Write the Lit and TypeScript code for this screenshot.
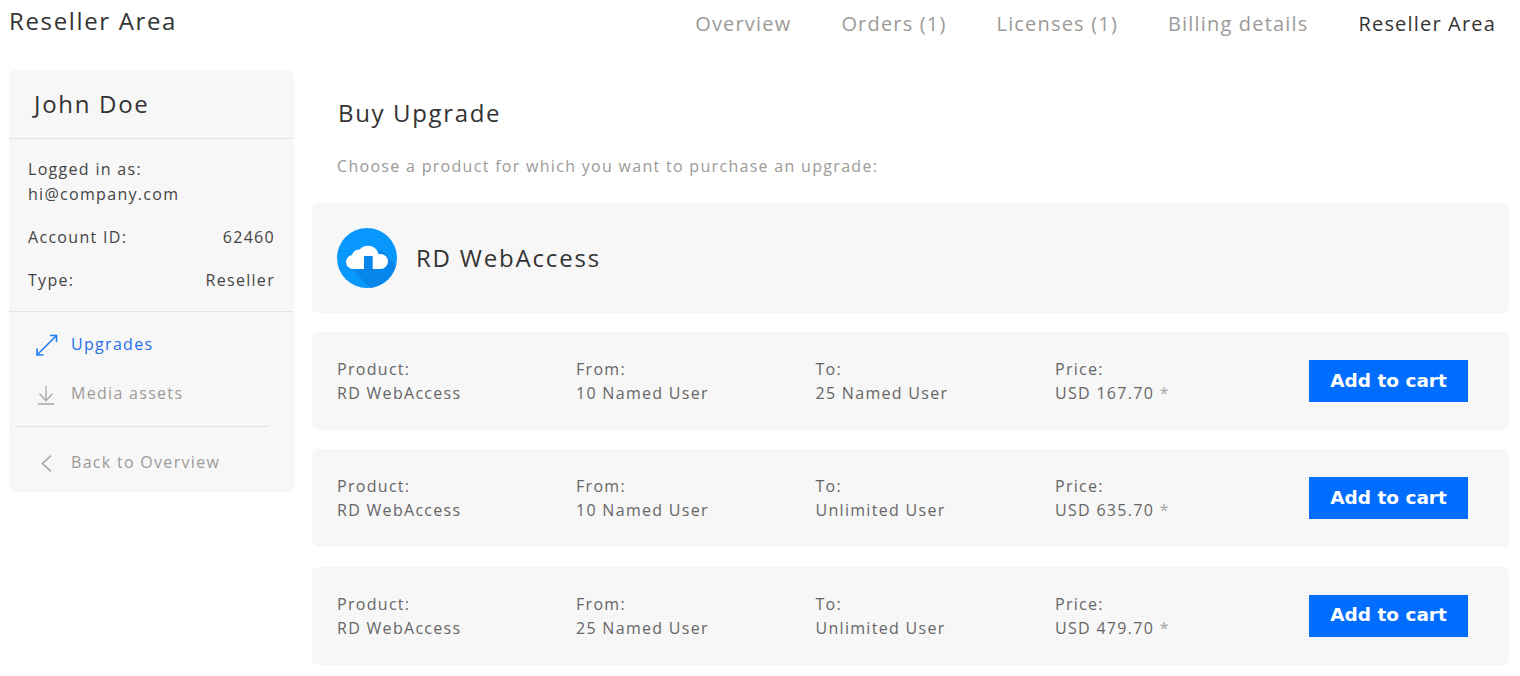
import { LitElement, html, css, svg } from "lit";
import { customElement } from "lit/decorators.js";

const rows = [
  ["RD WebAccess", "10 Named User", "25 Named User", "USD 167.70"],
  ["RD WebAccess", "10 Named User", "Unlimited User", "USD 635.70"],
  ["RD WebAccess", "25 Named User", "Unlimited User", "USD 479.70"],
];

@customElement("app-root")
export class AppRoot extends LitElement {
  static styles = css`
    :host { display: block; width: 1520px; height: 676px; overflow: hidden; background: #fff; font-family: "Open Sans", sans-serif; color: #333; letter-spacing: 1.3px; }
    * { box-sizing: border-box; }
    header { height: 70px; display: flex; justify-content: space-between; padding: 0 24px 0 9px; }
    .brand { font-size: 24px; line-height: 42px; letter-spacing: 1.65px; color: #333; }
    nav { display: flex; gap: 50px; padding-top: 3px; font-size: 20px; line-height: 42px; letter-spacing: 1.18px; color: #9c9a98; }
    nav .on { color: #333; }
    .page { display: flex; padding-left: 9px; gap: 18px; }
    aside { width: 285px; height: 422px; background: #f7f7f7; border-radius: 6px; flex: none; }
    .name { height: 69px; border-bottom: 1px solid #e3e3e3; padding-left: 25px; font-size: 24px; line-height: 68px; letter-spacing: 1.7px; }
    .info { height: 173px; border-bottom: 1px solid #e3e3e3; padding: 18px 19px 0 19px; font-size: 16px; line-height: 25px; color: #444; }
    .kv { display: flex; justify-content: space-between; margin-top: 18px; }
    .menu { font-size: 16px; color: #9c9a98; }
    .item { display: flex; align-items: center; height: 25px; }
    .item svg { width: 24px; height: 24px; margin-left: 25px; margin-right: 13px; flex: none; }
    .item.up { margin-top: 19px; color: #1f6fe8; }
    .item.media { margin-top: 24px; }
    .rule { height: 1px; background: #e3e3e3; margin: 21px 25px 22px 6px; }
    main { width: 1197px; flex: none; }
    h1 { margin: 0; padding: 25px 0 0 26px; font-size: 24px; font-weight: 400; line-height: 36px; letter-spacing: 1.65px; color: #333; }
    .hint { padding: 23px 0 0 25px; margin: 0; font-size: 16px; line-height: 25px; color: #9c9a98; }
    .card { background: #f7f7f7; border-radius: 6px; }
    .prod { margin-top: 24px; height: 110px; display: flex; align-items: center; padding-left: 25px; gap: 19px; font-size: 24px; letter-spacing: 1.8px; }
    .prod span { padding-bottom: 2px; }
    .prod svg { width: 60px; height: 60px; flex: none; }
    .list { display: flex; flex-direction: column; gap: 19.4px; padding-top: 19px; }
    .row { height: 98px; display: grid; grid-template-columns: 239px 239.5px 239.5px 254px 159px; align-items: center; padding-left: 25px; font-size: 16px; line-height: 24px; color: #666; }
    .star { color: #a5a5a5; }
    button { width: 159px; height: 42px; border: 0; padding: 0 0 2px; background: #006dff; color: #fff; font-family: "DejaVu Sans", sans-serif; font-weight: 700; font-size: 18.5px; letter-spacing: 0; }
  `;

  private cloud() {
    return html`<svg viewBox="0 0 60 60">
      ${svg`
      <defs><clipPath id="c"><circle cx="30" cy="30" r="30"></circle></clipPath></defs>
      <circle cx="30" cy="30" r="30" fill="#0898fd"></circle>
      <path clip-path="url(#c)" d="M44 22 L62 40 V62 H35 L14 40 Z" fill="#0686ea"></path>
      <g fill="#fff">
        <circle cx="16" cy="34" r="7"></circle>
        <circle cx="22" cy="28.500" r="7"></circle>
        <circle cx="31" cy="28.700" r="11"></circle>
        <circle cx="43.500" cy="33.500" r="7.500"></circle>
        <rect x="16" y="30" width="28" height="11"></rect>
      </g>
      <rect x="27" y="28" width="8.700" height="14" fill="#0686ea"></rect>
      `}
    </svg>`;
  }

  render() {
    return html`
      <header>
        <div class="brand">Reseller Area</div>
        <nav><span>Overview</span><span>Orders (1)</span><span>Licenses (1)</span><span>Billing details</span><span class="on">Reseller Area</span></nav>
      </header>
      <div class="page">
        <aside>
          <div class="name">John Doe</div>
          <div class="info">
            <div>Logged in as:<br />hi@company.com</div>
            <div class="kv"><span>Account ID:</span><span>62460</span></div>
            <div class="kv"><span>Type:</span><span>Reseller</span></div>
          </div>
          <div class="menu">
            <div class="item up">
              <svg viewBox="0 0 24 24" fill="none" stroke="#1f7cf2" stroke-width="1.600">
                ${svg`<path d="M3 23 L22.500 3.500 M16 3.500 H22.500 V10 M3 16.500 V23 H9.500"></path>`}
              </svg>Upgrades
            </div>
            <div class="item media">
              <svg viewBox="0 0 24 24" fill="none" stroke="#a8a8a8" stroke-width="1.300">
                ${svg`<path d="M12 5 V20 M5.500 12.800 L12 19.700 L18.500 12.800 M3.700 23 H20"></path>`}
              </svg>Media assets
            </div>
            <div class="rule"></div>
            <div class="item">
              <svg viewBox="0 0 24 24" fill="none" stroke="#a0a0a0" stroke-width="1.500">
                ${svg`<path d="M17 5.500 L8.500 13.500 L17 21.500"></path>`}
              </svg>Back to Overview
            </div>
          </div>
        </aside>
        <main>
          <h1>Buy Upgrade</h1>
          <p class="hint">Choose a product for which you want to purchase an upgrade:</p>
          <div class="card prod">${this.cloud()}<span>RD WebAccess</span></div>
          <div class="list">
            ${rows.map(
              (r) => html`<div class="card row">
                <div>Product:<br />${r[0]}</div>
                <div>From:<br />${r[1]}</div>
                <div>To:<br />${r[2]}</div>
                <div>Price:<br />${r[3]} <span class="star">*</span></div>
                <button>Add to cart</button>
              </div>`
            )}
          </div>
        </main>
      </div>
    `;
  }
}
